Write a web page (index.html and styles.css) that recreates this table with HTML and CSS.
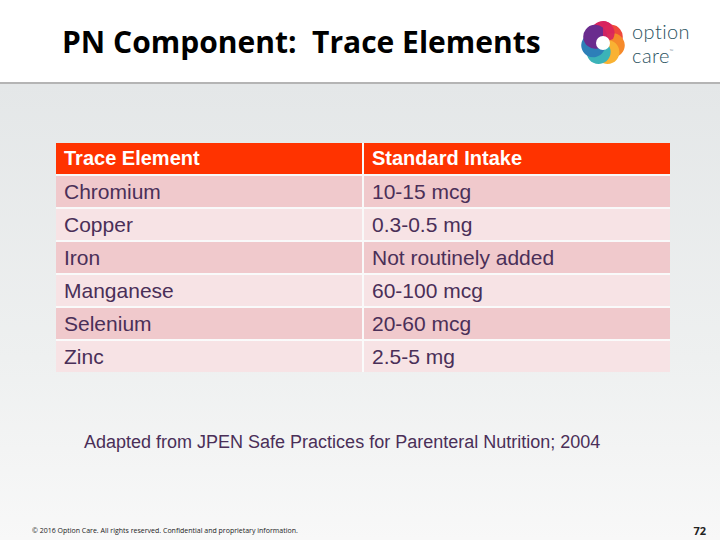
FILE: index.html
```html
<!DOCTYPE html>
<html>
<head>
<meta charset="utf-8">
<link rel="stylesheet" href="styles.css">
</head>
<body>
<div class="slide">
  <header class="header">
    <h1 class="title">PN Component:&nbsp; Trace Elements</h1>
    <div class="logo">
      <svg class="logo-mark" width="46" height="46" viewBox="-23 -23 46 46">
        <g>
          <circle cx="0" cy="-10" r="12" fill="#d8245f" transform="rotate(0)"/>
          <circle cx="0" cy="-10" r="12" fill="#ef4a3a" transform="rotate(51)"/>
          <circle cx="0" cy="-10" r="12" fill="#f68a2a" transform="rotate(103)"/>
          <circle cx="0" cy="-10" r="12" fill="#f9b233" transform="rotate(154)"/>
          <circle cx="0" cy="-10" r="12" fill="#3bb3b8" transform="rotate(206)"/>
          <circle cx="0" cy="-10" r="12" fill="#2d7fb8" transform="rotate(257)"/>
          <circle cx="0" cy="-10" r="12" fill="#6a2c8e" transform="rotate(309)"/>
          <path d="M0 -22 A12 12 0 0 1 10 -4 L0 0 Z" fill="#d8245f" opacity="0.9"/>
        </g>
        <circle cx="0" cy="0" r="7" fill="#ffffff"/>
      </svg>
      <div class="logo-text">
        <span>option</span>
        <span>care<sup>™</sup></span>
      </div>
    </div>
  </header>
  <main class="content">
    <div class="table">
      <div class="cell head">Trace Element</div>
      <div class="cell head">Standard Intake</div>
      <div class="cell odd">Chromium</div>
      <div class="cell odd">10-15 mcg</div>
      <div class="cell even">Copper</div>
      <div class="cell even">0.3-0.5 mg</div>
      <div class="cell odd">Iron</div>
      <div class="cell odd">Not routinely added</div>
      <div class="cell even">Manganese</div>
      <div class="cell even">60-100 mcg</div>
      <div class="cell odd">Selenium</div>
      <div class="cell odd">20-60 mcg</div>
      <div class="cell even">Zinc</div>
      <div class="cell even">2.5-5 mg</div>
    </div>
    <p class="caption">Adapted from JPEN Safe Practices for Parenteral Nutrition; 2004</p>
    <footer class="footer">
      <span class="copy">© 2016 Option Care. All rights reserved. Confidential and proprietary information.</span>
      <span class="page">72</span>
    </footer>
  </main>
</div>
</body>
</html>
```

FILE: styles.css
```css
html, body {
  margin: 0;
  padding: 0;
}
body {
  width: 720px;
  height: 540px;
  overflow: hidden;
  font-family: "Liberation Sans", Arial, sans-serif;
}
.slide {
  width: 720px;
  height: 540px;
  display: flex;
  flex-direction: column;
}
.header {
  height: 82px;
  background: #ffffff;
  border-bottom: 2px solid #b4b4b4;
  display: flex;
  align-items: flex-start;
  box-sizing: content-box;
}
.title {
  margin: 22px 0 0 62px;
  font-family: "Open Sans", sans-serif;
  font-weight: 700;
  font-size: 30px;
  letter-spacing: 0;
  color: #000;
  white-space: nowrap;
  line-height: 40px;
}
.logo {
  margin: 20px 30px 0 auto;
  display: flex;
  align-items: center;
  gap: 6px;
}
.logo-mark {
  display: block;
}
.logo-text {
  display: flex;
  flex-direction: column;
  font-family: "Lato", sans-serif;
  font-weight: 300;
  font-size: 20px;
  line-height: 20px;
  color: #2a5260;
  letter-spacing: 0.4px;
}
.logo-text sup {
  font-size: 5px;
  vertical-align: 10px;
  letter-spacing: 0;
}
.content {
  flex: 1;
  background: linear-gradient(#e4e7e8, #eef0f0 60%, #f8f8f8);
  display: flex;
  flex-direction: column;
}
.table {
  margin: 59px 0 0 56px;
  width: 614px;
  display: grid;
  grid-template-columns: 306px 306px;
  grid-auto-rows: 31px;
  gap: 2px;
  background: rgba(255,255,255,0.7);
}
.cell {
  font-size: 21px;
  line-height: 31px;
  padding-left: 8px;
  color: #4a2f58;
}
.head {
  background: #ff3300;
  color: #ffffff;
  font-weight: 700;
  font-size: 20px;
}
.odd {
  background: #f0c9cc;
}
.even {
  background: #f7e3e5;
}
.caption {
  margin: 60px 0 0 84px;
  font-size: 18px;
  color: #4a2f58;
}
.footer {
  margin-top: auto;
  height: 20px;
  display: flex;
  align-items: center;
  justify-content: space-between;
  padding: 0 14px 0 32px;
}
.copy {
  font-family: "Open Sans", sans-serif;
  font-size: 7px;
  color: #222;
}
.page {
  font-family: "Open Sans", sans-serif;
  font-weight: 700;
  font-size: 11px;
  color: #222;
}
```
